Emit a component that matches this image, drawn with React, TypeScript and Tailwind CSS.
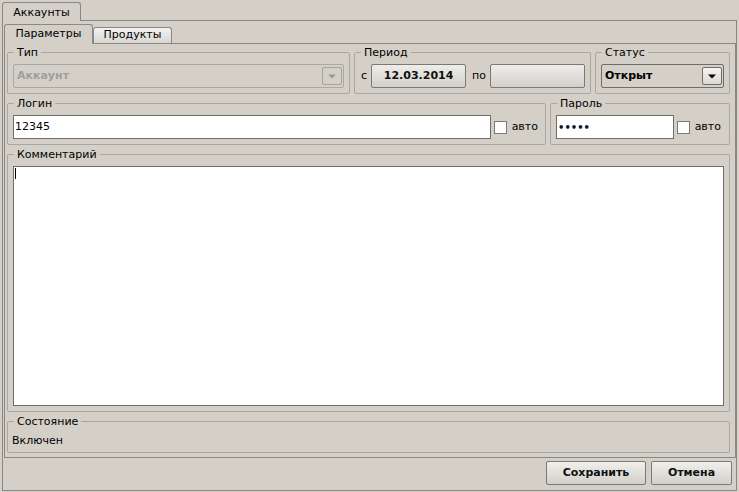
import React from "react";

function Arrow({ color }: { color: string }) {
  return (
    <svg width="8" height="5" viewBox="0 0 8 5">
      <path d="M0 0.5H8L4 4.5Z" fill={color} />
    </svg>
  );
}

function Legend({ children }: { children: React.ReactNode }) {
  return <legend className="ml-[6px] px-[3px] leading-[13px] text-[11px] text-black">{children}</legend>;
}

function Checkbox() {
  return <div className="w-[13px] h-[13px] bg-white border border-[#7d7b77] shrink-0" />;
}

export default function App() {
  return (
    <div className="w-[739px] h-[492px] bg-[#d4d0c8] pt-[2px] px-[2px] pb-[1px] flex flex-col font-['DejaVu_Sans',sans-serif] text-[11px] text-black overflow-hidden">
      {/* outer tab bar */}
      <div className="flex h-[18px] shrink-0">
        <div className="relative z-10 w-[79px] h-[19px] border border-b-0 border-[#8a8884] rounded-t-[3px] bg-[#d4d0c8] flex items-center justify-center leading-[17px]">
          Аккаунты
        </div>
      </div>
      {/* outer panel */}
      <div className="flex-1 border border-[#8a8884] flex flex-col pl-[1px] pt-[3px] pb-[5px]">
        {/* inner tab bar */}
        <div className="flex items-end h-[19px] shrink-0">
          <div className="relative z-10 w-[89px] h-[20px] -mb-[1px] border border-b-0 border-[#8a8884] rounded-t-[3px] bg-[#d4d0c8] flex items-center justify-center">
            Параметры
          </div>
          <div className="w-[79px] h-[16px] border border-b-0 border-[#8a8884] rounded-t-[3px] bg-linear-to-b from-[#f3f2f0] to-[#d8d5d0] flex items-center justify-center">
            Продукты
          </div>
        </div>
        {/* inner panel */}
        <div className="h-[415px] border border-[#8a8884] pl-[2px] pr-[5px] pt-[2px] flex flex-col">
          {/* row 1 */}
          <div className="flex gap-[4px]">
            <fieldset className="w-[343px] border border-[#aaa7a1] rounded-[2px]">
              <Legend>Тип</Legend>
              <div className="px-[5px] pt-[5px] pb-[5px]">
                <div className="h-[24px] border border-[#aaa8a3] rounded-[2px] flex items-center pl-[3px] pr-[1px]">
                  <span className="flex-1 font-bold text-[#a09e99]">Аккаунт</span>
                  <div className="w-[20px] h-[18px] border border-[#a5a39e] rounded-[2px] flex items-center justify-center">
                    <Arrow color="#9c9a96" />
                  </div>
                </div>
              </div>
            </fieldset>
            <fieldset className="w-[237px] border border-[#aaa7a1] rounded-[2px]">
              <Legend>Период</Legend>
              <div className="pl-[6px] pr-[5px] pt-[5px] pb-[5px] flex items-center h-[34px]">
                <span>с</span>
                <div className="ml-[4px] w-[95px] h-[24px] border border-[#7b7975] rounded-[2px] bg-linear-to-b from-[#eeedea] to-[#d3d0ca] flex items-center justify-center font-bold text-[#101010]">
                  12.03.2014
                </div>
                <span className="ml-[6px]">по</span>
                <div className="ml-[4px] flex-1 h-[24px] border border-[#7b7975] rounded-[2px] bg-linear-to-b from-[#eeedea] to-[#d3d0ca]" />
              </div>
            </fieldset>
            <fieldset className="flex-1 border border-[#aaa7a1] rounded-[2px]">
              <Legend>Статус</Legend>
              <div className="px-[5px] pt-[5px] pb-[5px]">
                <div className="h-[24px] border border-[#6f6d69] rounded-[2px] flex items-center pl-[3px] pr-[1px]">
                  <span className="flex-1 font-bold">Открыт</span>
                  <div className="w-[20px] h-[18px] border border-[#6f6d69] rounded-[2px] bg-linear-to-b from-[#f4f3f1] to-[#dcd9d4] flex items-center justify-center">
                    <Arrow color="#000000" />
                  </div>
                </div>
              </div>
            </fieldset>
          </div>
          {/* row 2 */}
          <div className="flex gap-[4px] mt-[3px]">
            <fieldset className="w-[539px] border border-[#aaa7a1] rounded-[2px]">
              <Legend>Логин</Legend>
              <div className="pl-[5px] pr-[7px] pt-[5px] pb-[5px] flex items-center">
                <div className="flex-1 h-[24px] bg-white border border-[#6f6d69] flex items-center pl-[1px]">12345</div>
                <div className="ml-[3px]"><Checkbox /></div>
                <span className="ml-[5px]">авто</span>
              </div>
            </fieldset>
            <fieldset className="flex-1 border border-[#aaa7a1] rounded-[2px]">
              <Legend>Пароль</Legend>
              <div className="pl-[5px] pr-[8px] pt-[5px] pb-[5px] flex items-center">
                <div className="flex-1 h-[24px] bg-white border border-[#6f6d69] flex items-center pl-[1px] font-bold text-[10px] text-[#101030] tracking-[0px]">•••••</div>
                <div className="ml-[3px]"><Checkbox /></div>
                <span className="ml-[5px]">авто</span>
              </div>
            </fieldset>
          </div>
          {/* row 3 */}
          <fieldset className="mt-[3px] border border-[#aaa7a1] rounded-[2px]">
            <Legend>Комментарий</Legend>
            <div className="px-[5px] pt-[5px] pb-[5px]">
              <div className="h-[240px] bg-white border border-[#6f6d69] pl-[1px] pt-[1px]">
                <div className="w-[1px] h-[11px] bg-black" />
              </div>
            </div>
          </fieldset>
          {/* row 4 */}
          <fieldset className="mt-[3px] border border-[#aaa7a1] rounded-[2px]">
            <Legend>Состояние</Legend>
            <div className="pl-[4px] pt-[6px] pb-[5px] leading-[13px]">Включен</div>
          </fieldset>
        </div>
        {/* buttons */}
        <div className="flex justify-end gap-[5px] pr-[4px] mt-[3px] h-[24px] shrink-0">
          <div className="w-[100px] h-[24px] border border-[#7b7975] rounded-[2px] bg-linear-to-b from-[#f0efec] to-[#d3d0ca] flex items-center justify-center font-bold text-[#101010]">
            Сохранить
          </div>
          <div className="w-[81px] h-[24px] border border-[#7b7975] rounded-[2px] bg-linear-to-b from-[#f0efec] to-[#d3d0ca] flex items-center justify-center font-bold text-[#101010]">
            Отмена
          </div>
        </div>
      </div>
    </div>
  );
}
